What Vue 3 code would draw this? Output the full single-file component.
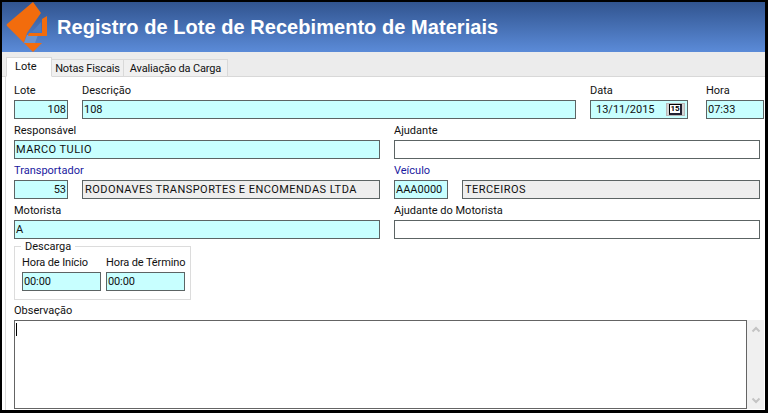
<script setup>
const tabs = ['Notas Fiscais', 'Avaliação da Carga']
</script>

<template>
  <div class="frame">
    <header class="head">
      <svg class="logo" width="48" height="52" viewBox="0 0 48 52">
        <path d="M33 2 L41 13 L27 33 L24 43 L7 26 Q6 25 7 24 Z" fill="#f26c0d" />
        <path d="M24 43 L42 43 L33 52 Z" fill="#f26c0d" />
        <path d="M27 35 L38 35 L35 43 L24 43 Z" fill="#6d93cc" />
        <path d="M42 19 L47 16 L47 36 L28 36 L29 33 L42 33 Z" fill="#f26c0d" />
        <path d="M41 22 L41 32 L32 32 Z" fill="#4f7cc0" />
      </svg>
      <h1>Registro de Lote de Recebimento de Materiais</h1>
    </header>

    <nav class="tabs">
      <div class="tab active">Lote</div>
      <div v-for="(t, i) in tabs" :key="t" class="tab" :class="'t' + i">{{ t }}</div>
    </nav>

    <main class="page">
      <div class="row">
        <div class="f w-lote"><label>Lote</label><div class="in req num">108</div></div>
        <div class="f w-desc"><label>Descrição</label><div class="in req">108</div></div>
        <div class="f w-data">
          <label>Data</label>
          <div class="in req date">
            <span>13/11/2015</span>
            <span class="cal"><b>15</b></span>
          </div>
        </div>
        <div class="f w-hora"><label>Hora</label><div class="in req">07:33</div></div>
      </div>

      <div class="row">
        <div class="f half"><label>Responsável</label><div class="in req caps">MARCO TULIO</div></div>
        <div class="f half2"><label>Ajudante</label><div class="in"></div></div>
      </div>

      <div class="row">
        <div class="f w-lote"><label class="blue">Transportador</label><div class="in req num">53</div></div>
        <div class="f w-transp"><label>&nbsp;</label><div class="in ro caps">RODONAVES TRANSPORTES E ENCOMENDAS LTDA</div></div>
        <div class="f w-lote"><label class="blue">Veículo</label><div class="in req">AAA0000</div></div>
        <div class="f w-tipo"><label>&nbsp;</label><div class="in ro caps">TERCEIROS</div></div>
      </div>

      <div class="row">
        <div class="f half"><label>Motorista</label><div class="in req">A</div></div>
        <div class="f half2"><label>Ajudante do Motorista</label><div class="in"></div></div>
      </div>

      <div class="group">
        <span class="legend">Descarga</span>
        <div class="f w-h"><label>Hora de Início</label><div class="in req">00:00</div></div>
        <div class="f w-h"><label>Hora de Término</label><div class="in req">00:00</div></div>
      </div>

      <div class="obs-label">Observação</div>
      <div class="obs">
        <div class="memo"><i class="caret"></i></div>
        <div class="scroll">
          <svg width="10" height="7" viewBox="0 0 10 7"><path d="M1.5 5.5 L5 2 L8.5 5.5" fill="none" stroke="#c4c4c4" stroke-width="2" /></svg>
          <svg width="10" height="7" viewBox="0 0 10 7"><path d="M1.5 1.5 L5 5 L8.5 1.5" fill="none" stroke="#c4c4c4" stroke-width="2" /></svg>
        </div>
      </div>
    </main>
  </div>
</template>

<style scoped>
.frame {
  width: 768px;
  height: 413px;
  box-sizing: border-box;
  border: solid #000;
  border-width: 2px 3px 3px 2px;
  display: flex;
  flex-direction: column;
  overflow: hidden;
  background: #fff;
  font-family: Roboto, "Liberation Sans", Arial, sans-serif;
  font-size: 11px;
  color: #111;
}
.head {
  height: 50px;
  flex: none;
  display: flex;
  align-items: center;
  position: relative;
  background: linear-gradient(#31548f, #5b8bd8);
}
.logo { position: absolute; left: -2px; top: -2px; }
h1 {
  margin: 0 0 0 55px;
  font-family: "Liberation Sans", Arial, sans-serif;
  font-size: 20px;
  font-weight: bold;
  letter-spacing: 0.05px;
  color: #fff;
  white-space: nowrap;
}
.tabs {
  height: 25px;
  flex: none;
  box-sizing: border-box;
  display: flex;
  align-items: flex-end;
  padding-left: 4px;
  background: #ececec;
  border-bottom: 1px solid #d8d8d8;
}
.tab {
  height: 18px;
  box-sizing: border-box;
  margin-bottom: -1px;
  padding-top: 2px;
  background: #f0f0f0;
  border: 1px solid #d9d9d9;
  border-left: none;
  line-height: 14px;
  letter-spacing: -0.15px;
  text-align: center;
  white-space: nowrap;
}
.t0 { width: 72px; }
.t1 { width: 104px; }
.tab.active {
  position: relative;
  height: 20px;
  padding: 2px 0 0 8px;
  width: 46px;
  letter-spacing: 0;
  text-align: left;
  background: #fff;
  border-left: 1px solid #d9d9d9;
  border-bottom: 1px solid #fff;
}
.page {
  flex: 1;
  margin-left: 3px;
  padding: 6px 0 0 8px;
  border-left: 1px solid #dcdcdc;
  display: flex;
  flex-direction: column;
  background: #fff;
}
.row { display: flex; height: 40px; flex: none; }
.f { display: flex; flex-direction: column; flex: none; }
label { height: 17px; line-height: 16px; white-space: nowrap; }
.blue { color: #1a1aa0; }
.in {
  height: 19px;
  box-sizing: border-box;
  border: 1px solid #5c6464;
  padding: 0 1px;
  line-height: 18px;
  background: #fff;
  white-space: nowrap;
  overflow: hidden;
}
.req { background: #c8ffff; }
.ro { background: #eeeeee; padding-left: 2px; }
.caps { letter-spacing: 0.45px; }
.num { text-align: right; }
.w-lote { width: 54px; margin-right: 14px; }
.w-desc { width: 494px; margin-right: 14px; }
.w-data { width: 98px; margin-right: 18px; }
.w-hora { width: 58px; }
.half { width: 366px; margin-right: 14px; }
.half2 { width: 366px; }
.w-transp { width: 298px; margin-right: 14px; }
.w-tipo { width: 298px; }
.date { display: flex; justify-content: space-between; padding-left: 5px; }
.cal {
  width: 19px;
  height: 13px;
  margin: 2px 1px 0 0;
  box-sizing: border-box;
  background: #d4d4d4;
  border: 1px solid #b8b8b8;
  display: flex;
  align-items: center;
  justify-content: center;
}
.cal b {
  display: block;
  width: 13px;
  height: 11px;
  box-sizing: border-box;
  background: #fff;
  border: 1px solid #000;
  border-width: 1px 2px 2px 1px;
  border-color: #000 #223 #223 #000;
  font-size: 8px;
  line-height: 8px;
  color: #000;
  text-align: center;
  overflow: hidden;
}
.group {
  margin: 3px 0 0;
  padding: 8px 0 0 7px;
  width: 177px;
  height: 54px;
  flex: none;
  box-sizing: border-box;
  border: 1px solid #dcdcdc;
  display: flex;
  gap: 5px;
  position: relative;
}
.legend {
  position: absolute;
  left: 6px;
  top: -7px;
  padding: 0 4px;
  line-height: 14px;
  background: #fff;
}
.w-h { width: 79px; letter-spacing: -0.12px; }
.obs-label { height: 17px; line-height: 16px; margin-top: 3px; flex: none; }
.obs { display: flex; height: 89px; flex: none; }
.memo {
  width: 733px;
  box-sizing: border-box;
  border: 1px solid #646464;
  background: #fff;
  padding: 2px 1px;
}
.caret { display: block; width: 1px; height: 13px; background: #000; }
.scroll {
  width: 17px;
  background: #f0f0f0;
  display: flex;
  flex-direction: column;
  justify-content: space-between;
  align-items: center;
  padding: 6px 0 5px;
  box-sizing: border-box;
}
</style>
